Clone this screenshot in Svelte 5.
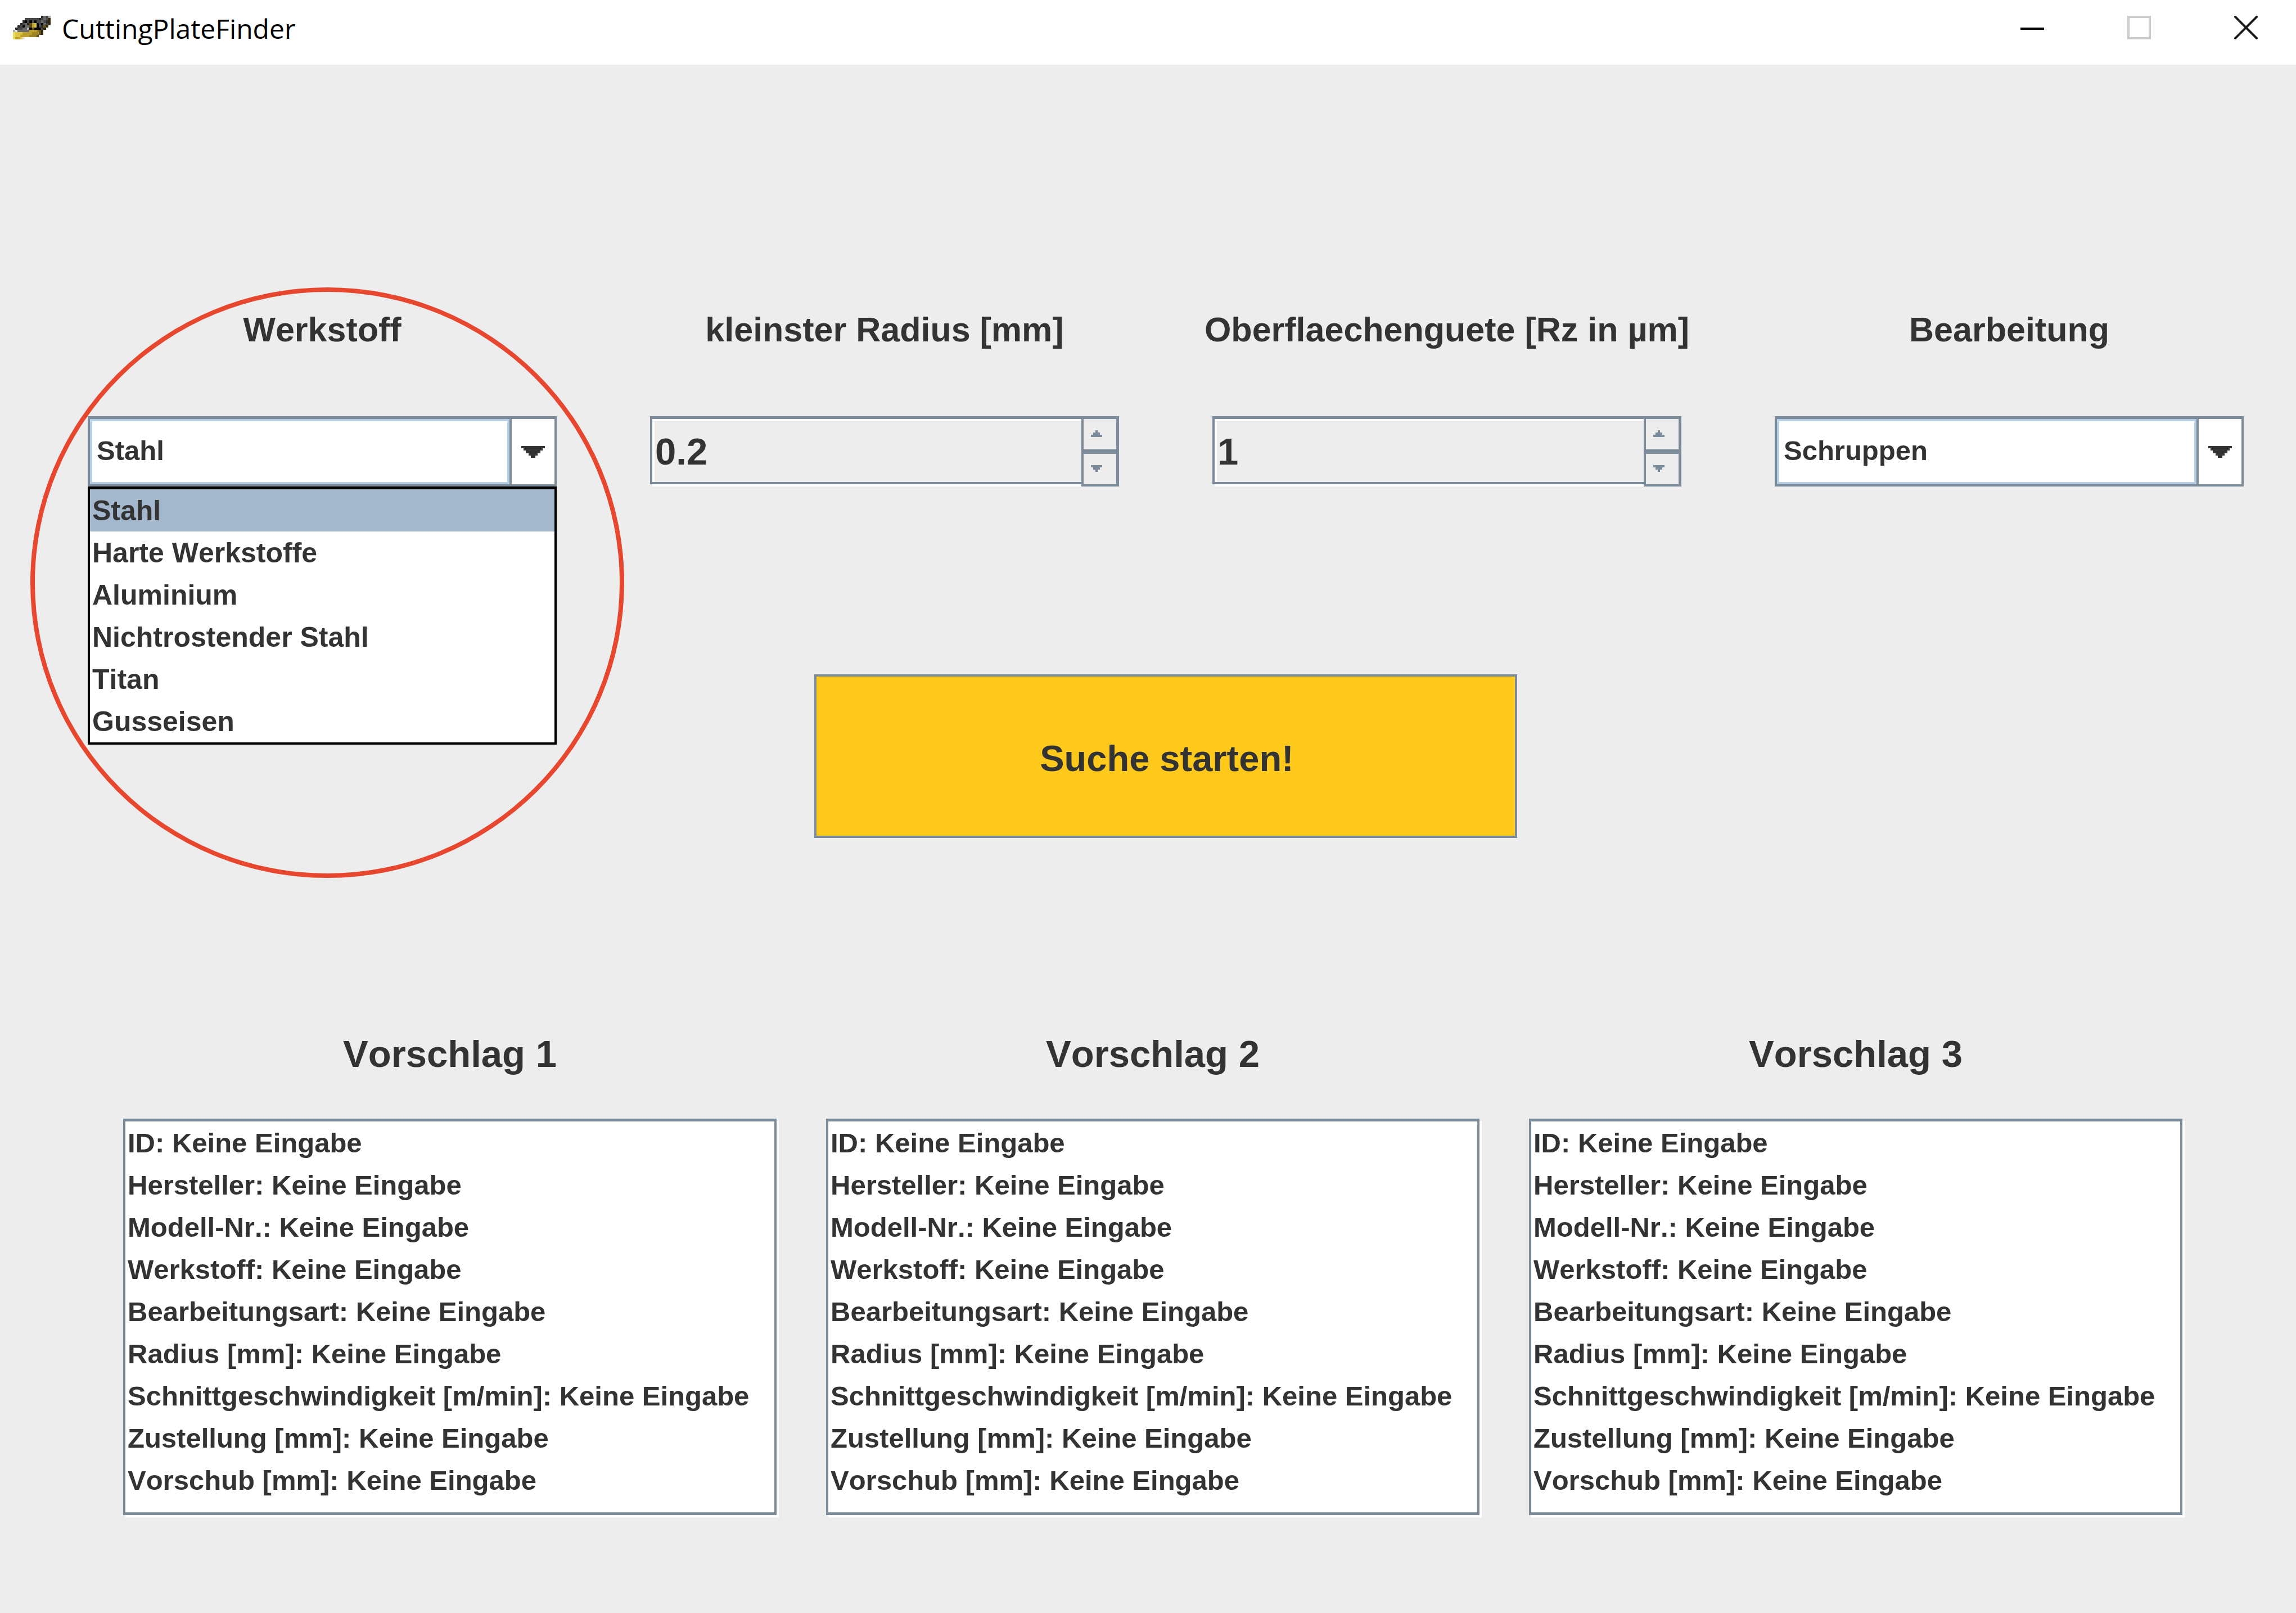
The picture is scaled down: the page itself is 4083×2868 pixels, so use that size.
<script>
  const materials = ['Stahl', 'Harte Werkstoffe', 'Aluminium', 'Nichtrostender Stahl', 'Titan', 'Gusseisen'];
  const operations = ['Schruppen', 'Schlichten'];
  const properties = [
    'ID',
    'Hersteller',
    'Modell-Nr.',
    'Werkstoff',
    'Bearbeitungsart',
    'Radius [mm]',
    'Schnittgeschwindigkeit [m/min]',
    'Zustellung [mm]',
    'Vorschub [mm]'
  ];
  const suggestions = [1, 2, 3];

  let material = $state('Stahl');
  let operation = $state('Schruppen');
  let radius = $state(0.2);
  let finish = $state(1);

  // Application icon: one character per pixel
  const palette = {
    k: '#060606', d: '#292929', g: '#484848', m: '#686868', l: '#a8a8a8', w: '#dedede',
    b: '#33260f', y: '#e9e052', Y: '#dcc644', o: '#bd9f2c', O: '#a08322', n: '#665219'
  };
  const iconRows = [
    '............dmgl',
    '.....ggggggdgmgb',
    '....dkgkgkggmgdb',
    '...dgmdnoYkgkmgb',
    '..dgkmmnoYkgdnb.',
    '.dggmmlknkkkgb..',
    'lwmmmmmoooOnb...',
    'yYYYooooOOOnb...',
    'yYYooooOOOn.....',
    'yooYw...........'
  ];
  const iconPixels = iconRows.flatMap((row, y) =>
    [...row].map((c, x) => ({ x, y, fill: palette[c] })).filter((p) => p.fill)
  );

  const step = (value, delta) => Math.max(0, Math.round((value + delta) * 10) / 10);
</script>

{#snippet stepper(up, down)}
  <div class="steps">
    <button type="button" aria-label="Erhöhen" onclick={up}>
      <svg class="step-icon" viewBox="0 0 5 3" shape-rendering="crispEdges" aria-hidden="true">
        <path d="M2 0h1v1h1v1h1v1H0V2h1V1h1z" />
      </svg>
    </button>
    <button type="button" aria-label="Verringern" onclick={down}>
      <svg class="step-icon" viewBox="0 0 5 3" shape-rendering="crispEdges" aria-hidden="true">
        <path d="M0 0h5v1H4v1H3v1H2V2H1V1H0z" />
      </svg>
    </button>
  </div>
{/snippet}

{#snippet dropArrow()}
  <span class="drop">
    <svg viewBox="0 0 10 5" shape-rendering="crispEdges" aria-hidden="true">
      <path d="M0 0h10v1H9v1H8v1H7v1H6v1H4V4H3V3H2V2H1V1H0z" />
    </svg>
  </span>
{/snippet}

<div class="window">
  <header class="titlebar">
    <svg class="app-icon" viewBox="0 0 16 10" shape-rendering="crispEdges" aria-hidden="true">
      {#each iconPixels as p}
        <rect x={p.x} y={p.y} width="1" height="1" fill={p.fill} />
      {/each}
    </svg>
    <h1>CuttingPlateFinder</h1>
    <div class="controls">
      <button type="button" aria-label="Minimieren">
        <svg viewBox="0 0 42 42" aria-hidden="true"><path d="M0 21h42v4H0z" /></svg>
      </button>
      <button type="button" aria-label="Maximieren" disabled>
        <svg viewBox="0 0 42 42" aria-hidden="true">
          <rect x="2" y="2" width="38" height="38" fill="none" stroke="#cbcbcb" stroke-width="4" />
        </svg>
      </button>
      <button type="button" aria-label="Schließen">
        <svg viewBox="0 0 42 42" aria-hidden="true">
          <path d="M2 2l38 38M40 2L2 40" fill="none" stroke="#1a1a1a" stroke-width="4" stroke-linecap="square" />
        </svg>
      </button>
    </div>
  </header>

  <main>
    <form class="filters" onsubmit={(e) => e.preventDefault()} id="search">
      <div class="field">
        <label for="material">Werkstoff</label>
        <div class="combo">
          <select id="material" bind:value={material}>
            {#each materials as m}
              <option>{m}</option>
            {/each}
          </select>
          {@render dropArrow()}
          <ul class="popup" role="listbox" aria-label="Werkstoff">
            {#each materials as m}
              <li role="option" aria-selected={m === material} class:selected={m === material}>{m}</li>
            {/each}
          </ul>
        </div>
        <div class="marker" aria-hidden="true"></div>
      </div>

      <div class="field">
        <label for="radius">kleinster Radius [mm]</label>
        <div class="spinner">
          <input id="radius" type="number" step="0.1" min="0" bind:value={radius} />
          {@render stepper(() => (radius = step(radius, 0.1)), () => (radius = step(radius, -0.1)))}
        </div>
      </div>

      <div class="field">
        <label for="finish">Oberflaechenguete [Rz in µm]</label>
        <div class="spinner">
          <input id="finish" type="number" min="0" bind:value={finish} />
          {@render stepper(() => (finish = step(finish, 1)), () => (finish = step(finish, -1)))}
        </div>
      </div>

      <div class="field">
        <label for="operation">Bearbeitung</label>
        <div class="combo">
          <select id="operation" bind:value={operation}>
            {#each operations as o}
              <option>{o}</option>
            {/each}
          </select>
          {@render dropArrow()}
        </div>
      </div>
    </form>

    <button class="search" type="submit" form="search">Suche starten!</button>

    <div class="results">
      {#each suggestions as n}
        <section>
          <h2>Vorschlag {n}</h2>
          <ul class="panel">
            {#each properties as p}
              <li>{p}: Keine Eingabe</li>
            {/each}
          </ul>
        </section>
      {/each}
    </div>
  </main>
</div>

<style>
  :global(body) {
    background: #ededed;
  }

  .window {
    --line: #7b8b9a;
    --focus: #b6cee4;
    --text: #333;
    box-sizing: border-box;
    min-height: 100vh;
    background: #ededed;
    color: var(--text);
    font-family: 'Liberation Sans', Arial, sans-serif;
    font-weight: 700;
    font-size: 49px;
    font-kerning: none;
  }

  button,
  input,
  select {
    box-sizing: border-box;
    margin: 0;
    padding: 0;
    border: 0;
    border-radius: 0;
    background: none;
    color: inherit;
    font: inherit;
    font-kerning: none;
    outline: none;
  }

  ul {
    margin: 0;
    padding: 0;
    list-style: none;
  }

  svg {
    display: block;
  }

  .titlebar {
    display: flex;
    align-items: center;
    box-sizing: border-box;
    height: 115px;
    padding: 0 0 17px 23px;
    background: #fff;
  }

  .app-icon {
    width: 67px;
    height: 42px;
  }

  h1 {
    flex: 1;
    margin: 0 0 0 20px;
    padding-top: 4px;
    color: #000;
    font: 400 48px/68px 'Open Sans', 'Noto Sans', sans-serif;
  }

  .controls {
    display: flex;
    gap: 12px;
  }

  .controls button {
    display: flex;
    align-items: center;
    justify-content: center;
    width: 178px;
    height: 98px;
  }

  .controls svg {
    width: 42px;
    height: 42px;
  }

  main {
    padding: 436px 93px 160px 156px;
  }

  .filters {
    display: grid;
    grid-template-columns: repeat(4, minmax(0, 1fr));
    gap: 166px;
  }

  .field {
    position: relative;
    display: flex;
    flex-direction: column;
    gap: 119px;
  }

  label {
    align-self: center;
    font-size: 61px;
    line-height: 70px;
    white-space: nowrap;
  }

  .combo {
    position: relative;
    display: flex;
    box-sizing: border-box;
    height: 125px;
    border: 4px solid var(--line);
    border-top-width: 5px;
    background: #fff;
  }

  .combo select {
    flex: 1;
    min-width: 0;
    padding: 0 8px 4px;
    border: 4px solid var(--focus);
    background: #fff;
    appearance: none;
  }

  .drop {
    display: flex;
    align-items: center;
    justify-content: center;
    width: 76px;
    border-left: 4px solid var(--line);
    pointer-events: none;
  }

  .drop svg {
    width: 42px;
    height: 21px;
    fill: var(--text);
  }

  .popup {
    position: absolute;
    z-index: 1;
    top: 100%;
    left: -4px;
    right: -4px;
    margin-top: 4px;
    border: 4px solid #000;
    border-top-width: 5px;
    background: #fff;
    font-size: 50px;
  }

  li {
    padding: 4px 4px 2px;
    line-height: 69px;
    white-space: nowrap;
  }

  .selected {
    background: #a3b7cd;
  }

  /* Highlight ring laid over the first field */
  .marker {
    position: absolute;
    z-index: 2;
    box-sizing: border-box;
    top: -40px;
    left: -102px;
    right: -120px;
    height: 1050px;
    border: 8px solid #e8472f;
    border-radius: 50%;
    pointer-events: none;
  }

  .spinner {
    display: flex;
    height: 125px;
  }

  .spinner input {
    flex: 1;
    min-width: 0;
    height: 121px;
    padding: 2px 0 0;
    border: solid var(--line);
    border-width: 5px 0 4px 4px;
    box-shadow: inset 4px 4px 0 #fff, 4px 4px 0 #fff;
    font-size: 67px;
    text-indent: 5px;
    appearance: textfield;
  }

  .spinner input::-webkit-inner-spin-button {
    display: none;
  }

  .steps {
    position: relative;
    display: grid;
    grid-template-rows: 1fr 1fr;
    gap: 8px;
    box-sizing: border-box;
    width: 67px;
    border: solid var(--line);
    border-width: 5px 5px 4px 4px;
    background: var(--line);
  }

  .steps button {
    display: flex;
    align-items: center;
    justify-content: center;
    padding: 0 12px 2px 0;
    background: #ededed;
  }

  .step-icon {
    width: 20px;
    height: 12px;
    fill: var(--line);
  }

  .search {
    display: block;
    width: 1250px;
    max-width: 100%;
    height: 291px;
    margin: 334px auto 346px;
    padding: 8px 0 0 4px;
    border: 4px solid var(--line);
    background: #fec91b;
    font-size: 65px;
  }

  .results {
    display: grid;
    grid-template-columns: repeat(3, minmax(0, 1fr));
    gap: 88px;
    padding: 0 109px 0 63px;
  }

  h2 {
    margin: 0 0 77px;
    font-size: 67px;
    line-height: 76px;
    text-align: center;
  }

  .panel {
    padding-bottom: 20px;
    border: 4px solid var(--line);
    border-width: 5px 4px;
    background: #fff;
    box-shadow: 4px 4px 0 #fff;
  }
</style>
